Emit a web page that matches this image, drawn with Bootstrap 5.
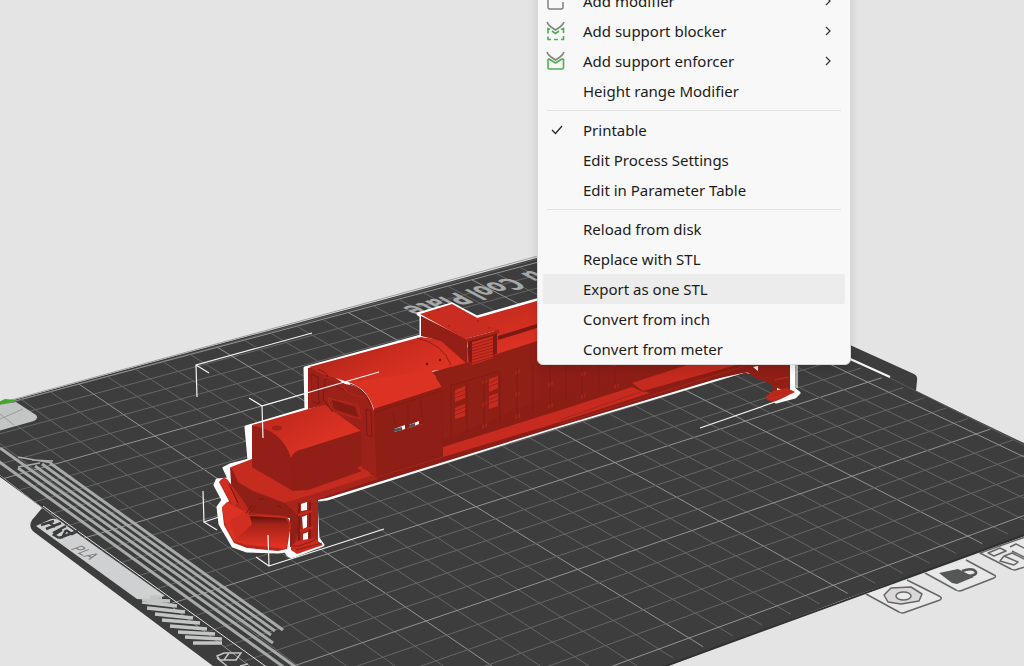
<!DOCTYPE html>
<html lang="en">
<head>
<meta charset="utf-8">
<meta name="viewport" content="width=device-width, initial-scale=1">
<title>Plate view</title>
<link href="https://cdn.jsdelivr.net/npm/bootstrap@5.3.0/dist/css/bootstrap.min.css" rel="stylesheet">
<style>
  body { background: #e4e4e4; font-family: "Noto Sans", "Open Sans", sans-serif; }
  .scene { inset: 0; }
  .context-menu {
    display: block; left: 537px; top: -20px; width: 314px; padding: 5px 5px 0;
    background: #f8f8f8; border: 1px solid #d9d9d9; border-radius: 6px;
    box-shadow: 0 4px 10px rgba(0,0,0,.12); font-size: 15px;
  }
  .context-menu .dropdown-item {
    height: 30px; padding: 0 14px 0 3px; line-height: 30px; color: #1b1b1b; border-radius: 2px;
  }
  .context-menu .dropdown-item.hovered { background: #ececec; }
  .context-menu .dropdown-divider { margin: 4px; border-color: #e2e2e2; }
  .item-icon { width: 20px; height: 20px; margin-right: 17px; flex: none; }
  .item-arrow { width: 6px; height: 10px; }
</style>
</head>
<body class="vh-100 overflow-hidden position-relative">
<main>
<svg class="scene position-absolute w-100 h-100" viewBox="0 0 1024 666" preserveAspectRatio="xMidYMid slice" role="img" aria-label="Locomotive model on the build plate">
  <defs>
    <clipPath id="bed"><path d="M-5 404L600 241L860 361L1030 445V533L610 688H200L-5 470z"/></clipPath>
    <linearGradient id="roof" gradientUnits="userSpaceOnUse" x1="350" y1="350" x2="375" y2="400"><stop stop-color="#b9271b"/><stop offset=".5" stop-color="#cf2d20"/><stop offset="1" stop-color="#dc3223"/></linearGradient>
    <linearGradient id="hood" gradientUnits="userSpaceOnUse" x1="285" y1="415" x2="305" y2="450"><stop stop-color="#c32a1d"/><stop offset="1" stop-color="#da3123"/></linearGradient>
    <linearGradient id="side" gradientUnits="userSpaceOnUse" x1="500" y1="330" x2="520" y2="430"><stop stop-color="#941f16"/><stop offset="1" stop-color="#8a1d15"/></linearGradient>
    <linearGradient id="blade" gradientUnits="userSpaceOnUse" x1="0" y1="514" x2="0" y2="545"><stop stop-color="#4e100b"/><stop offset=".35" stop-color="#a62318"/><stop offset="1" stop-color="#dd3123"/></linearGradient>
    <linearGradient id="longroof" gradientUnits="userSpaceOnUse" x1="500" y1="305" x2="515" y2="350"><stop stop-color="#c52b1e"/><stop offset="1" stop-color="#dc3224"/></linearGradient>
  </defs>

  <!-- plate body -->
  <path fill="#3c3d3c" d="M-5 405L540 257L600 241L850 345L914 374Q918 376 917 381L916 391L1030 446V534L840 601L668 666H213L34 532Q28 527 32 520L43 507L-5 472z"/>
  <path stroke="#9c9d9c" fill="none" d="M-5 404.500L600 239"/>
  <path stroke="#5a5b5a" fill="none" d="M-5 407L600 242M850 358L1030 448"/>
  <path stroke="#2f3030" stroke-width="2" fill="none" d="M-5 472L43 507M1030 533L660 668"/>
  <path stroke="#f5f5f5" stroke-width="2" fill="none" d="M848 358L890 377"/>
  <g id="grid" clip-path="url(#bed)" fill="none"></g>

  <!-- origin corner -->
  <path fill="#c3c5c4" d="M-2 405L16 402L36 415Q39 418 34 421L-2 431z"/>
  <path stroke="#999b9a" d="M0 414L14 425M0 419L23 409"/>
  <path fill="#44a72f" d="M-2 402L5 399L17 400L13 402L-2 405z"/>

  <!-- purge strips -->
  <g stroke="#a8aaa9" stroke-width="3" fill="none">
    <path d="M50 463L283 630M42 464L275 631M35 466L271 635M0 448L273 643M18 468L297 668"/>
    <path d="M-2 461L285 668"/>
    <path stroke-width="1.500" d="M18 457L52 463M32 460L53 461M18 467L40 463"/>
    <path stroke="#dfe0df" stroke-width="1" d="M43 506L268 668"/>
  </g>

  <!-- front label -->
  <path fill="#cfd0d1" d="M36 526L51 519Q56 518 60 521L165 596L150 600L137 599z"/>
  <g stroke="#3c3d3c" stroke-width="2.500" fill="none"><path d="M41 525L54 521M46 529L61 523M50 523L55 527M53 533L66 526M59 538L78 531M59 538L54 535L62 530M66 530L72 534L78 531M66 530L62 538"/></g>
  <text transform="translate(70 549) rotate(29) skewX(-40)" font-family="Inter, sans-serif" font-size="12" fill="#777878">PLA</text>
  <g stroke="#c3c5c4" stroke-width="4">
    <path d="M150 597L162 597M142 600L170 601M142 602L177 606M147 608L185 612M155 614L193 618M162 620L200 623M170 626L207 629M178 632L215 634M185 637L222 639M193 643L222 643" stroke-width="3.500"/>
    <path d="M217 656L224 653H241L236 660H220zM224 660L229 653M217 658L227 666M240 666L248 664" fill="none" stroke-width="1.500"/>
  </g>

  <!-- plate name, facing the far edge -->
  <g font-family="DejaVu Sans, sans-serif" font-weight="bold" font-size="20" fill="#a7a9a8">
    <text transform="translate(457 292) rotate(164) skewX(46)">Plate</text>
    <text transform="translate(510 277) rotate(164) skewX(46)">Cool</text>
    <text transform="translate(533 270) rotate(164) skewX(46)">u</text>
  </g>

  <!-- bed symbols -->
  <g fill="#e9e8e8" stroke="#656766" stroke-width="1.500" stroke-linejoin="round">
    <path d="M866 594L899 612Q902 614 906 612L940 600Q943 598 939 596L907 580"/>
    <path fill="#dbd7d8" d="M884 595L891 588L911 587L922 594L919 601L901 604L888 602z"/>
    <ellipse cx="903.500" cy="596" rx="7.500" ry="4" fill="#ebe9e9"/>
    <path d="M925 573L956 590Q959 592 963 590L994 578Q997 576 994 575L966 560"/>
    <path fill="#555756" stroke="none" d="M939 573L958 569L974 577L957 584L952 583z"/>
    <path fill="none" stroke="#555756" stroke-width="2.500" d="M964 576Q977 576 976 572Q973 567 962 571"/>
    <path d="M980 553L1011 569Q1014 571 1018 569L1028 566V536z"/>
    <path d="M988 553L1000 548L1006 551L994 556zM1000 561L1004 556L1018 562L1014 565zM1010 547L1016 544L1028 550M1012 551L1024 557M1004 556L1012 553L1026 560"/>
  </g>

  <!-- selection halo -->
  <path fill="#fff" stroke="#fff" stroke-width="3" stroke-linejoin="round" d="M246 427L306 409L305 368L421 336V316L418 314L452 304L477 317L540 299L794 350V389L799 393L795 397L776 402L780 380L745 371L560 426L327 499L316 500L318 538L323 545L299 554Q288 560 286 551L278 552L247 551L233 546L220 524L218 507L223 500L215 485L217 480L229 479L224 468L230 465L249 460z"/>

  <!-- running board and nose -->
  <path fill="#8b1e16" d="M252 459L540 348L640 340L790 350V365L743 371L560 426L327 498L317 500L290 502z"/>
  <path fill="#8f1f17" d="M230 467L285 500L304 500V545L290 547V518L251 515L232 500z"/>
  <path fill="#c52b1f" d="M231 467L252 459L265 470L365 470L374 476L318 494L285 503L253 491L238 482z"/>
  <path fill="#a9251b" d="M285 503L374 475L378 479L327 496L318 500V545H293L303 520z"/>

  <!-- side wall -->
  <path fill="url(#side)" d="M376 398L545 340L790 350L635 388L443 450L377 476L361 468z"/>
  <path fill="#c72b1f" d="M443 447L570 407L632 387L650 393L560 422L443 457z"/>
  <path fill="#8c1d15" d="M632 387L643 392L755 357L790 352V368L743 373L650 393z"/>
  <path fill="#c42a1e" d="M632 383L690 364H740L643 391z"/>
  <path stroke="#a5251b" stroke-width="1" fill="none" d="M377 477L443 457M560 424L745 366M643 391L560 420"/>

  <!-- hood -->
  <path fill="#931f18" d="M252 425Q281 430 291 452L293 491L252 467z"/>
  <path fill="#911f17" d="M291 455Q292 450 302 449L362 429L365 470L308 490L292 491z"/>
  <path fill="url(#hood)" d="M252 425L326 404L358 422Q364 426 363 430L303 449Q293 451 291 458Q283 431 252 425z"/>
  <ellipse cx="277" cy="428" rx="5" ry="2.500" fill="#a22118"/>
  <path fill="#c52b1f" d="M357 468L363 465L374 471L367 474z"/>

  <!-- cab -->
  <path fill="#9c2118" d="M308 368L318 367L345 384Q368 386 374 412L377 476L362 468L361 431L325 405L308 409z"/>
  <path fill="url(#roof)" d="M309 367L421 337L462 343L488 364L432 371L441 386L374 408Q368 390 351 383L322 374z"/>
  <path fill="#dc3223" d="M352 382L429 371L442 387L374 409Q367 389 352 382z"/>
  <path fill="#8e1e16" d="M374 409L442 387L443 453L377 476z"/>
  <path fill="#a42319" stroke="#b8281c" stroke-width="1" d="M328 398L358 405L361 419L331 411z"/>
  <path fill="#841b13" d="M332 400L355 407L358 417L334 409z"/>
  <path fill="none" stroke="#7d1912" d="M311 374L318 377L319 404L311 401zM366 409L371 411L372 437L367 435zM318 369Q333 375 325 380L323 399L333 412M336 386L344 390M350 384Q364 387 371 406"/>
  <path fill="none" stroke="#7d1912" opacity=".6" d="M393 412L396 429L423 422L420 400M376 412L441 391M408 404V421"/>
  <path fill="none" stroke="#b2271c" d="M323 377Q337 378 343 387T363 397M310 379L311 402M394 432L423 424"/>
  <path fill="#f6f6f6" d="M394 429L405 425V429L394 432zM409 425L419 421V424L409 428z"/>
  <path fill="#4e5352" d="M394 429L402 427V430L394 432zM409 425L415 423V426L409 428z"/>
  <path fill="none" stroke="#8e1e16" stroke-width="1" d="M417 338Q443 344 451 365"/>
  <g fill="#6b150f"><circle cx="427" cy="364" r="1.200"/><circle cx="440" cy="360" r="1.200"/></g>

  <!-- stack box and long roof -->
  <path fill="url(#longroof)" d="M477 318L540 300V352L497 354V334z"/>
  <path fill="#7c1912" d="M498 336L540 323V327L498 340z"/>
  <path fill="#941f17" d="M421 316L467 339V364L441 341L421 336z"/>
  <path fill="#7d1912" d="M467 339L497 332V354L469 366z"/>
  <path fill="#901f16" d="M432 372L462 364L497 354L540 340V400L443 440L442 386z"/>
  <path fill="#c92c20" d="M420 314L452 304L499 330L465 339z"/>
  <path fill="#a52319" d="M465 339L499 330V333L466 342z"/>
  <path fill="#cb2c20" d="M472 342L493 336V358L472 365z"/>
  <path stroke="#9a2118" d="M472 345L493 339M472 348L493 342M472 351L493 345M472 354L493 348M472 357L493 351M472 360L493 354M472 363L493 357"/>
  <g fill="#8d1f16"><circle cx="438" cy="310" r=".8"/><circle cx="478" cy="321" r=".8"/><circle cx="489" cy="328" r=".8"/><circle cx="449" cy="326" r=".8"/><circle cx="429" cy="315" r=".8"/></g>

  <!-- louvres, panel joints and hinges -->
  <g fill="#c72b1f"><path d="M455 390L465 386V398L455 402zM455 408L465 404V416L455 419zM489 379L498 376V388L489 392zM489 396L498 393V406L489 409z"/></g>
  <path stroke="#8f1e16" stroke-width=".8" d="M455 394L465 390M455 398L465 394M455 411L465 407M455 415L465 411M489 383L498 379M489 387L498 383M489 400L498 396M489 404L498 400"/>
  <path fill="none" stroke="#761711" opacity=".45" d="M451 388V438M467 383V433M484 378V427M500 373V422M517 368V417M533 365V412M550 364V406M566 364V401M582 364V396M599 364V391M615 364V387M450 386L500 371"/>
  <g id="hinges" fill="#b2271c" opacity=".6"></g>

  <!-- plow -->
  <path fill="#b8271c" d="M219 482Q224 475 230 483L243 500L251 513L284 516Q290 518 290 530L287 549L278 551L247 548L234 543L224 525L222 508L229 501z"/>
  <path fill="#dc3223" d="M222 507L227 502L251 515L252 529L247 545L234 541L225 524z"/>
  <path fill="#cf2e21" d="M236 540L250 524L251 516L245 512L230 520z"/>
  <path fill="url(#blade)" d="M249 514L285 517Q291 520 289 533L286 549L249 545L235 540L252 524z"/>
  <path fill="#ce2d20" d="M220 482Q223 475 228 480L237 503L234 507L228 497z"/>
  <path fill="none" stroke="#c42a1e" stroke-width="2" d="M238 499L248 515L284 517Q290 518 290 529"/>
  <path fill="none" stroke="#761711" d="M229 484L238 503M246 513L253 505M249 514L256 506M258 499H264M277 505L282 508"/>
  <path fill="#fff" d="M301 504L307 502V510L301 511zM302 517L307 515V527L303 529zM303 534L308 532V540L303 541z"/>
  <path stroke="#82190f" stroke-width="2" d="M299 503V542M310 502V540"/>
  <path stroke="#c72b1e" stroke-width="2" d="M298 515L312 511M300 531L313 527"/>
  <path fill="#c82b1f" d="M291 546L297 541L314 538L323 545L297 554L291 550z"/>
  <path stroke="#8a1d15" fill="none" d="M296 550L322 543M292 546H299L315 540"/>

  <!-- rear step -->
  <path fill="#901f16" d="M743 369L790 352V391L773 395L772 384L757 379z"/>
  <path fill="#fff" d="M753 367L758 366V371zM777 388L782 390L777 391z"/>
  <path fill="#ba281c" d="M766 396L773 391L787 388L795 392L775 402L767 400z"/>
  <path stroke="#c82b1f" fill="none" d="M775 380L788 377M770 399L793 392"/>

  <!-- bounding box corners -->
  <path fill="none" stroke="#f4f4f4" stroke-width="1.200" d="M197 397L196 365L312 333M196 365L209 373M263 438L262 406L379 372M262 406L249 398M203 491L204 522L219 517M204 522L217 530M268 535L269 566L384 529M269 566L256 557M700 428L795 395M797 365V388"/>
</svg>

<div class="dropdown-menu context-menu position-absolute" role="menu">
  <button class="dropdown-item d-flex align-items-center" type="button" role="menuitem">
    <svg class="item-icon" viewBox="0 0 20 20" fill="none" stroke="#808080" stroke-width="1.500"><path d="M2 4V16Q2 18 4 18H15Q17 18 17 16V11"/></svg>
    Add modifier
    <svg class="item-arrow ms-auto" viewBox="0 0 6 10" fill="none" stroke="#333" stroke-width="1.200"><path d="M1 1L5 5L1 9"/></svg>
  </button>
  <button class="dropdown-item d-flex align-items-center" type="button" role="menuitem">
    <svg class="item-icon" viewBox="0 0 20 20" fill="none" stroke-width="1.600"><path stroke="#828282" d="M1 1Q2 4 5 6L9.500 9L14 6Q17 4 18 1"/><path stroke="#4caf50" d="M5 18.500H2V15.500M2 12.500V7.500L4 8.500M6 10L9.500 12.500L13 10M15 8.500L17.500 7.500V12M17.500 15V18.500H15M8 18.500H12"/></svg>
    Add support blocker
    <svg class="item-arrow ms-auto" viewBox="0 0 6 10" fill="none" stroke="#333" stroke-width="1.200"><path d="M1 1L5 5L1 9"/></svg>
  </button>
  <button class="dropdown-item d-flex align-items-center" type="button" role="menuitem">
    <svg class="item-icon" viewBox="0 0 20 20" fill="none" stroke-width="1.600"><path stroke="#828282" d="M1 1Q2 4 5 6L9.500 9L14 6Q17 4 18 1"/><path stroke="#4caf50" stroke-linejoin="round" d="M2 8.500L3 8L9.500 12L16 8L17.500 8.500V16.500Q17.500 18 16 18H3.500Q2 18 2 16.500z"/></svg>
    Add support enforcer
    <svg class="item-arrow ms-auto" viewBox="0 0 6 10" fill="none" stroke="#333" stroke-width="1.200"><path d="M1 1L5 5L1 9"/></svg>
  </button>
  <button class="dropdown-item d-flex align-items-center" type="button" role="menuitem"><span class="item-icon"></span>Height range Modifier</button>
  <hr class="dropdown-divider">
  <button class="dropdown-item d-flex align-items-center" type="button" role="menuitemcheckbox" aria-checked="true">
    <svg class="item-icon" viewBox="0 0 20 20" fill="none" stroke="#222" stroke-width="1.200"><path d="M6 10L9.500 13.500L16 6"/></svg>
    Printable
  </button>
  <button class="dropdown-item d-flex align-items-center" type="button" role="menuitem"><span class="item-icon"></span>Edit Process Settings</button>
  <button class="dropdown-item d-flex align-items-center" type="button" role="menuitem"><span class="item-icon"></span>Edit in Parameter Table</button>
  <hr class="dropdown-divider">
  <button class="dropdown-item d-flex align-items-center" type="button" role="menuitem"><span class="item-icon"></span>Reload from disk</button>
  <button class="dropdown-item d-flex align-items-center" type="button" role="menuitem"><span class="item-icon"></span>Replace with STL</button>
  <button class="dropdown-item d-flex align-items-center hovered" type="button" role="menuitem"><span class="item-icon"></span>Export as one STL</button>
  <button class="dropdown-item d-flex align-items-center" type="button" role="menuitem"><span class="item-icon"></span>Convert from inch</button>
  <button class="dropdown-item d-flex align-items-center" type="button" role="menuitem"><span class="item-icon"></span>Convert from meter</button>
</div>
</main>
<script src="https://cdn.jsdelivr.net/npm/bootstrap@5.3.0/dist/js/bootstrap.bundle.min.js"></script>
<script>
  // Project bed coordinates (in 10 mm cells) through the camera.
  function project(u, v) {
    const s = (u / 5 - 1) / 4, t = (v / 5 - 1) / 3;
    const w = 1 + 0.125 * s - 0.123 * t;
    return [(155 + 604.4 * s + 218.6 * t) / w, (436 - 109.75 * s + 108.6 * t) / w].map(n => n.toFixed(1)).join(' ');
  }
  const grid = document.getElementById('grid');
  const NS = 'http://www.w3.org/2000/svg';
  function line(d, bold) {
    const p = document.createElementNS(NS, 'path');
    p.setAttribute('d', d);
    p.setAttribute('stroke', bold ? '#929392' : '#656665');
    grid.appendChild(p);
  }
  for (let i = 0; i <= 25; i++) {
    line(`M${project(i, 0)}L${project(i, 25.6)}`, i % 5 === 0);
    line(`M${project(0, i)}L${project(25.6, i)}`, i % 5 === 0);
  }
  // Door hinges repeat along the long side, in three rows.
  const hinges = document.getElementById('hinges');
  for (let i = 0; i < 5; i++) {
    for (let j = 0; j < 3; j++) {
      const p = document.createElementNS(NS, 'path');
      p.setAttribute('d', `M${482 + i * 33} ${381 - i * 10 + j * 22}l2 -1v4l-2 1zm3 -1l2 -1v4l-2 1z`);
      hinges.appendChild(p);
    }
  }
</script>
</body>
</html>
